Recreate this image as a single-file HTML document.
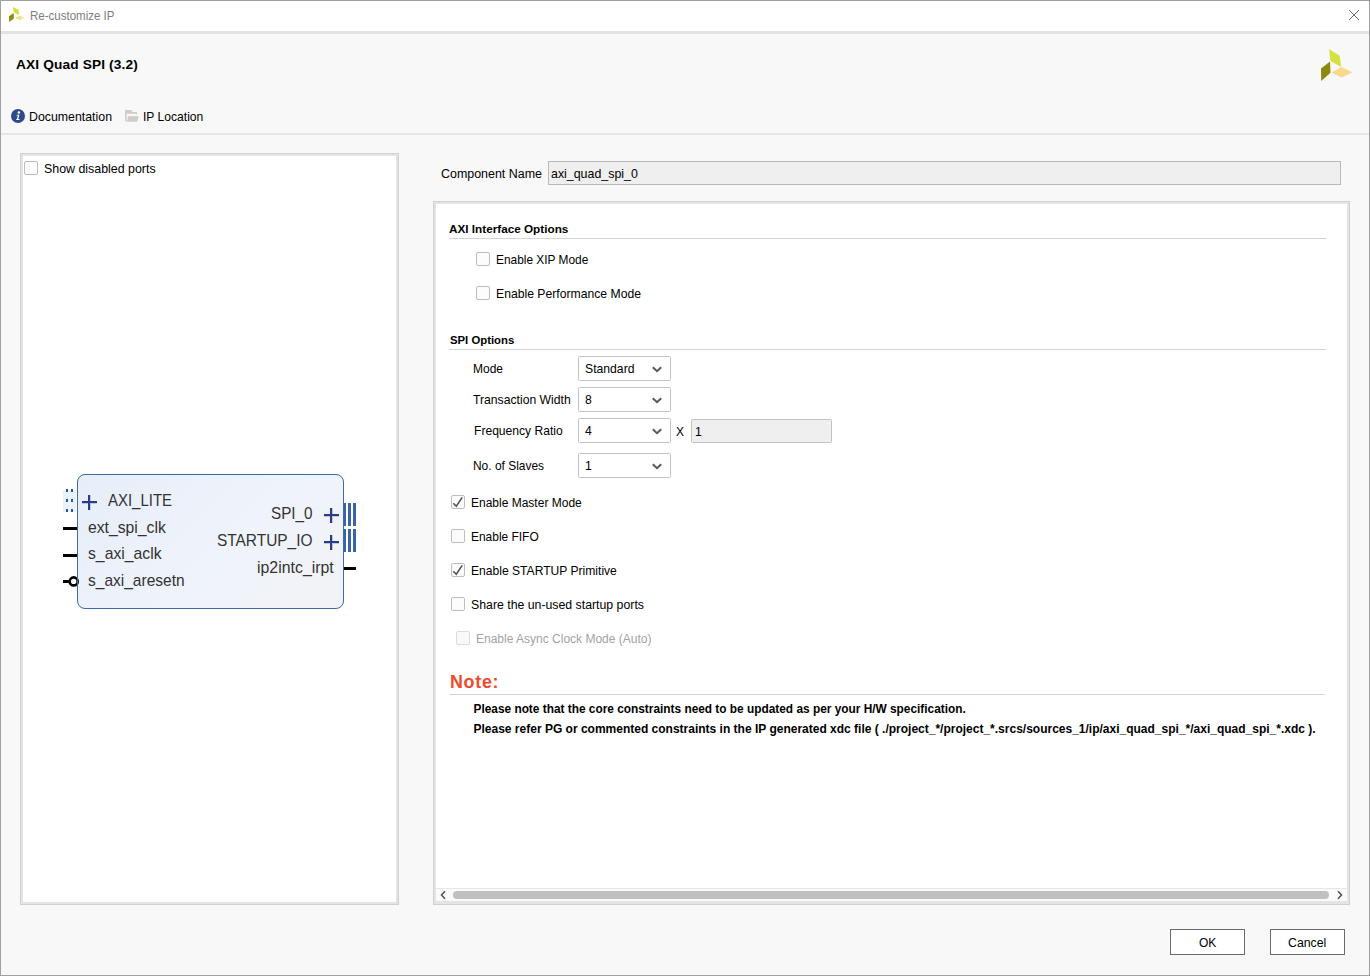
<!DOCTYPE html>
<html><head><meta charset="utf-8">
<style>
html,body{margin:0;padding:0;}
body{width:1370px;height:976px;overflow:hidden;position:relative;background:#f8f8f8;font-family:"Liberation Sans",sans-serif;color:#000;}
.a{position:absolute;}
.t{position:absolute;white-space:pre;line-height:1;}
.b{font-weight:bold;}
.cb{position:absolute;width:12px;height:12px;border:1px solid #bdbdbd;border-radius:2px;background:#fcfcfc;}
.cbd{border-color:#dcdcdc;background:#f9f9f9;}
.combo{position:absolute;width:93px;height:25px;border:1px solid #c2c2c2;border-radius:1.5px;background:#fff;box-sizing:border-box;}
.panel{position:absolute;background:#fff;border:1px solid #d0d0d0;box-sizing:border-box;}
.panel .in{position:absolute;left:0;top:0;right:0;bottom:0;border:2px solid #e4e4e4;}
.dg{font-size:17px;color:#333;transform-origin:0 0;}
.sep{position:absolute;height:1px;background:#d4d4d4;}
</style></head><body>
<!-- window frame -->
<div class="a" style="left:0;top:0;width:1370px;height:1px;background:#a0a0a0"></div>
<div class="a" style="left:0;top:0;width:1px;height:976px;background:#a0a0a0"></div>
<div class="a" style="left:1369px;top:0;width:1px;height:976px;background:#a0a0a0"></div>
<div class="a" style="left:0;top:975px;width:1370px;height:1px;background:#a0a0a0"></div>
<!-- title bar -->
<div class="a" style="left:1px;top:1px;width:1368px;height:30px;background:#fff"></div>
<div class="a" style="left:1px;top:31px;width:1368px;height:3px;background:#e3e3e3"></div>
<svg class="a" style="left:0;top:0" width="30" height="30" viewBox="0 0 30 30">
<polygon points="12.9,7 18.6,9.8 18.9,15.2 13.7,12.3" fill="#d5df3c"/>
<polygon points="13.7,13.1 13.9,18.4 9.2,21.9 9,16.2" fill="#8c8c0c"/>
<polygon points="15,18 19.3,15.4 24,17.6 19.7,20.5" fill="#e9e49a"/>
</svg>
<div class="t" style="left:30px;top:10px;font-size:12.8px;color:#7d7d7d;transform:scaleX(0.9);transform-origin:0 0">Re-customize IP</div>
<svg class="a" style="left:1345px;top:6px" width="18" height="18" viewBox="0 0 18 18">
<path d="M4 4L14 14M14 4L4 14" stroke="#6a6a6a" stroke-width="1" fill="none"/>
</svg>
<!-- header -->
<div class="t b" style="left:16px;top:58px;font-size:13.7px;letter-spacing:0.14px">AXI Quad SPI (3.2)</div>
<svg class="a" style="left:1310px;top:40px" width="50" height="50" viewBox="1310 40 50 50">
<polygon points="1329,49 1339.7,55.8 1341.2,67.1 1330.5,61" fill="#d6e040"/>
<polygon points="1330,61.5 1330.5,72.7 1321.2,81 1321,68.6" fill="#8a8a0c"/>
<polygon points="1331.5,72.7 1341.2,67.1 1352.5,72.2 1341.7,77.4" fill="#f8d88a"/>
</svg>
<!-- doc row -->
<svg class="a" style="left:11px;top:109px" width="14" height="14" viewBox="0 0 14 14">
<circle cx="7" cy="7" r="7" fill="#2e4a8b"/>
<circle cx="7.9" cy="3.5" r="1.3" fill="#fff"/>
<path d="M5.6 5.7H8.4L7.3 10.1H8.6L8.4 11.1H5.1L5.3 10.1H6L6.8 6.6H5.4z" fill="#fff"/>
</svg>
<div class="t" style="left:29px;top:110.5px;font-size:12.35px">Documentation</div>
<svg class="a" style="left:124px;top:109px" width="16" height="14" viewBox="0 0 16 14">
<path d="M1 1H7.5L8.5 3H13V5.6H11.8V4.7H2.6V12.6H1Z" fill="#cdcdc9"/>
<path d="M4 7.3H14.8L13.2 12.8H3Z" fill="#cdcdc9"/>
</svg>
<div class="t" style="left:143px;top:110.5px;font-size:12.1px">IP Location</div>
<div class="a" style="left:1px;top:133px;width:1368px;height:2px;background:#e6e6e6"></div>

<!-- left panel -->
<div class="panel" style="left:20px;top:153px;width:379px;height:752px"><div class="in"></div></div>
<div class="cb" style="left:24px;top:161px"></div>
<div class="t" style="left:44px;top:162.5px;font-size:12.4px">Show disabled ports</div>

<!-- block diagram -->
<div class="a" style="left:77px;top:474px;width:265px;height:133px;border:1px solid transparent;border-radius:8px;background:linear-gradient(135deg,#e7eef9 0%,#eff3fb 55%,#f2f3f6 100%)"></div>
<svg class="a" style="left:55px;top:480px" width="320" height="130" viewBox="55 480 320 130">
<rect x="63" y="490" width="13" height="22" fill="#e9f1fb"/>
<g fill="#2b5797">
<rect x="66" y="489" width="2" height="3"/><rect x="71" y="489" width="2" height="3"/>
<rect x="66" y="499" width="2" height="3"/><rect x="71" y="499" width="2" height="3"/>
<rect x="66" y="509" width="2" height="3"/><rect x="71" y="509" width="2" height="3"/>
</g>
<g fill="#3a64a8">
<rect x="344" y="503" width="2" height="23"/><rect x="348" y="503" width="3" height="23"/><rect x="353" y="503" width="3" height="23"/>
<rect x="344" y="529" width="2" height="23"/><rect x="348" y="529" width="3" height="23"/><rect x="353" y="529" width="3" height="23"/>
</g>
<g fill="#000">
<rect x="63" y="527" width="14" height="3"/>
<rect x="63" y="554" width="14" height="3"/>
<rect x="63" y="580" width="6" height="3"/>
<rect x="344" y="567" width="12" height="3"/>
</g>
<circle cx="73.7" cy="581.4" r="4" fill="#fff" stroke="#000" stroke-width="2.6"/>
</svg>
<div class="a" style="left:77px;top:474px;width:265px;height:133px;border:1px solid #3d6aa8;border-radius:8px;background:none"></div>
<svg class="a" style="left:55px;top:480px" width="320" height="130" viewBox="55 480 320 130">
<g fill="#b9c7df">
<rect x="82" y="503" width="15" height="1"/><rect x="90" y="495" width="1" height="15"/>
<rect x="324" y="516" width="15" height="1"/><rect x="332" y="508" width="1" height="15"/>
<rect x="324" y="543" width="15" height="1"/><rect x="332" y="535" width="1" height="15"/>
</g>
<g fill="#2b3c85">
<rect x="82" y="501" width="15" height="2"/><rect x="88" y="495" width="2" height="15"/>
<rect x="324" y="514" width="15" height="2"/><rect x="330" y="508" width="2" height="15"/>
<rect x="324" y="541" width="15" height="2"/><rect x="330" y="535" width="2" height="15"/>
</g>
</svg>
<div class="t dg" style="left:108px;top:491.5px;transform:scaleX(0.88)">AXI_LITE</div>
<div class="t dg" style="left:87.5px;top:519px;transform:scaleX(0.925)">ext_spi_clk</div>
<div class="t dg" style="left:87.5px;top:545px;transform:scaleX(0.926)">s_axi_aclk</div>
<div class="t dg" style="left:87.5px;top:572px;transform:scaleX(0.913)">s_axi_aresetn</div>
<div class="t dg" style="left:270.5px;top:504.5px;transform:scaleX(0.896)">SPI_0</div>
<div class="t dg" style="left:216.5px;top:531.5px;transform:scaleX(0.908)">STARTUP_IO</div>
<div class="t dg" style="left:256.5px;top:559px;transform:scaleX(0.934)">ip2intc_irpt</div>

<!-- component name -->
<div class="t" style="left:441px;top:168px;font-size:12.45px">Component Name</div>
<div class="a" style="left:548px;top:161px;width:793px;height:24px;border:1px solid #b9b9b9;background:#efefef;box-sizing:border-box"></div>
<div class="t" style="left:551px;top:168px;font-size:12.4px">axi_quad_spi_0</div>

<!-- right panel -->
<div class="panel" style="left:433px;top:201px;width:917px;height:704px"><div class="in"></div></div>

<div class="t b" style="left:449px;top:223px;font-size:11.74px">AXI Interface Options</div>
<div class="sep" style="left:449px;top:238px;width:877px"></div>
<div class="cb" style="left:476px;top:252px"></div>
<div class="t" style="left:496px;top:254.5px;font-size:11.9px">Enable XIP Mode</div>
<div class="cb" style="left:476px;top:286px"></div>
<div class="t" style="left:496px;top:287.5px;font-size:12.2px">Enable Performance Mode</div>

<div class="t b" style="left:450px;top:335px;font-size:11.34px">SPI Options</div>
<div class="sep" style="left:449px;top:349px;width:877px"></div>

<div class="t" style="left:473px;top:363px;font-size:12px">Mode</div>
<div class="combo" style="left:578px;top:356px"></div>
<div class="t" style="left:585px;top:362.5px;font-size:12.2px">Standard</div>
<div class="t" style="left:473px;top:393.5px;font-size:12.2px">Transaction Width</div>
<div class="combo" style="left:578px;top:387px"></div>
<div class="t" style="left:585px;top:393.5px;font-size:12.2px">8</div>
<div class="t" style="left:474px;top:425px;font-size:12.1px">Frequency Ratio</div>
<div class="combo" style="left:578px;top:418px"></div>
<div class="t" style="left:585px;top:425px;font-size:12.2px">4</div>
<div class="t" style="left:676px;top:426px;font-size:12px">X</div>
<div class="a" style="left:691px;top:419px;width:141px;height:24px;border:1px solid #c2c2c2;border-radius:1.5px;background:#efefef;box-sizing:border-box"></div>
<div class="t" style="left:695px;top:426px;font-size:12.2px">1</div>
<div class="t" style="left:473px;top:461px;font-size:11.95px">No. of Slaves</div>
<div class="combo" style="left:578px;top:453px"></div>
<div class="t" style="left:585px;top:460px;font-size:12.2px">1</div>
<svg class="a" style="left:650px;top:360px" width="16" height="120" viewBox="650 360 16 120">
<g stroke="#585858" stroke-width="2" fill="none">
<path d="M652.8 367.2l4.2 4l4.2-4"/>
<path d="M652.8 398.2l4.2 4l4.2-4"/>
<path d="M652.8 429.2l4.2 4l4.2-4"/>
<path d="M652.8 464.2l4.2 4l4.2-4"/>
</g>
</svg>

<div class="cb" style="left:451px;top:495px"></div>
<div class="t" style="left:471px;top:497px;font-size:12px">Enable Master Mode</div>
<div class="cb" style="left:451px;top:529px"></div>
<div class="t" style="left:471px;top:531.5px;font-size:11.95px">Enable FIFO</div>
<div class="cb" style="left:451px;top:563px"></div>
<div class="t" style="left:471px;top:564.5px;font-size:12.1px">Enable STARTUP Primitive</div>
<div class="cb" style="left:451px;top:597px"></div>
<div class="t" style="left:471px;top:599px;font-size:12.3px">Share the un-used startup ports</div>
<div class="cb cbd" style="left:456px;top:631px"></div>
<div class="t" style="left:476px;top:633px;font-size:12px;color:#a3a3a3">Enable Async Clock Mode (Auto)</div>
<svg class="a" style="left:450px;top:490px" width="20" height="90" viewBox="450 490 20 90">
<g stroke="#555" stroke-width="1.6" fill="none">
<path d="M453.3 503.2L456.3 506.2L462.2 497.4"/>
<path d="M453.3 571.2L456.3 574.2L462.2 565.4"/>
</g>
</svg>

<div class="t b" style="left:450px;top:673.5px;font-size:17.9px;letter-spacing:0.7px;color:#f04a2e">Note:</div>
<div class="sep" style="left:450px;top:694px;width:875px;background:#d4d4d4"></div>
<div class="t b" style="left:473.5px;top:703.5px;font-size:11.86px">Please note that the core constraints need to be updated as per your H/W specification.</div>
<div class="t b" style="left:473.5px;top:723px;font-size:12px">Please refer PG or commented constraints in the IP generated xdc file ( ./project_*/project_*.srcs/sources_1/ip/axi_quad_spi_*/axi_quad_spi_*.xdc ).</div>

<!-- scrollbar -->
<div class="a" style="left:436px;top:888px;width:911px;height:1px;background:#e6e6e6"></div>
<div class="a" style="left:436px;top:889px;width:911px;height:12px;background:#fafafa"></div>
<div class="a" style="left:436px;top:901px;width:911px;height:1px;background:#e4e4e4"></div>
<div class="a" style="left:453px;top:891px;width:876px;height:8px;border-radius:4px;background:#c0c0c0"></div>
<svg class="a" style="left:436px;top:888px" width="911" height="14" viewBox="436 888 911 14">
<g stroke="#505050" stroke-width="1.5" fill="none">
<path d="M445 891.3l-3.5 3.7l3.5 3.7"/>
<path d="M1338 891.3l3.5 3.7l-3.5 3.7"/>
</g>
</svg>

<!-- buttons -->
<div class="a" style="left:1170px;top:929px;width:75px;height:26px;border:1px solid #6b6b6b;background:#fff;box-sizing:border-box"></div>
<div class="t" style="left:1199px;top:937px;font-size:12px">OK</div>
<div class="a" style="left:1270px;top:929px;width:75px;height:26px;border:1px solid #6b6b6b;background:#fff;box-sizing:border-box"></div>
<div class="t" style="left:1288px;top:937px;font-size:12.3px">Cancel</div>
</body></html>
